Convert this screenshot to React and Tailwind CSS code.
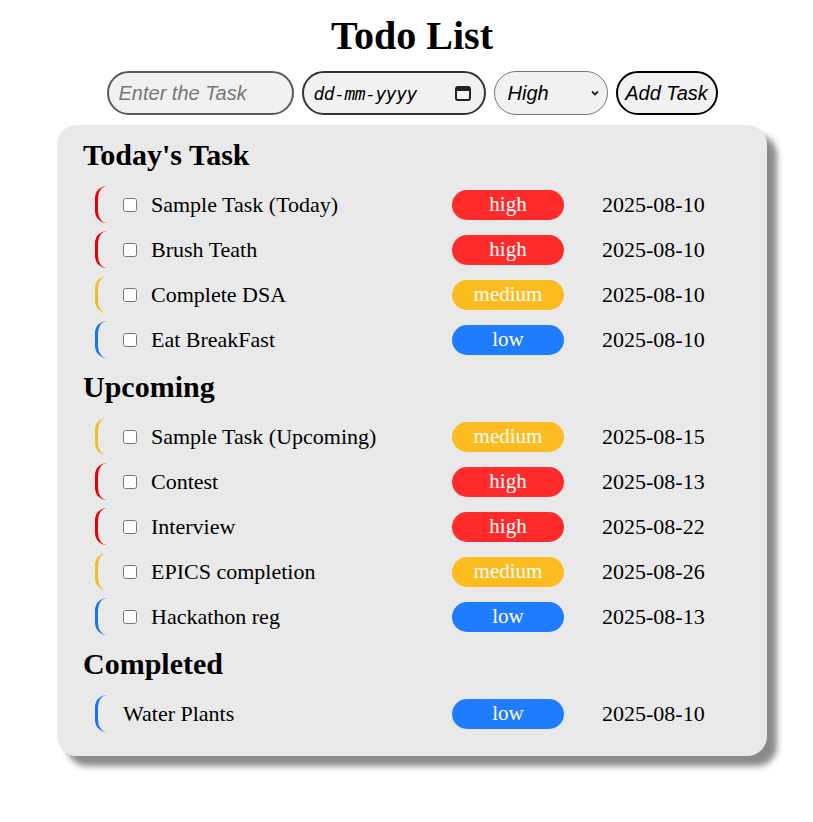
import React from "react";

const colors = {
  high: { badge: "bg-[#ff2a2a]", line: "border-l-[#e60000]" },
  medium: { badge: "bg-[#fcbc1f]", line: "border-l-[#f7b92a]" },
  low: { badge: "bg-[#1f7cff]", line: "border-l-[#1a73f0]" },
};

const today = [
  { text: "Sample Task (Today)", priority: "high", date: "2025-08-10" },
  { text: "Brush Teath", priority: "high", date: "2025-08-10" },
  { text: "Complete DSA", priority: "medium", date: "2025-08-10" },
  { text: "Eat BreakFast", priority: "low", date: "2025-08-10" },
];

const upcoming = [
  { text: "Sample Task (Upcoming)", priority: "medium", date: "2025-08-15" },
  { text: "Contest", priority: "high", date: "2025-08-13" },
  { text: "Interview", priority: "high", date: "2025-08-22" },
  { text: "EPICS completion", priority: "medium", date: "2025-08-26" },
  { text: "Hackathon reg", priority: "low", date: "2025-08-13" },
];

const completed = [{ text: "Water Plants", priority: "low", date: "2025-08-10" }];

const TaskRow = ({ task, done }) => (
  <li
    className={`grid grid-cols-[354px_112px_1fr] items-center h-[37px] rounded-[12px] border-l-[3px] ${colors[task.priority].line}`}
  >
    <div className="flex items-center pl-[25px]">
      {!done && (
        <input type="checkbox" className="w-[14px] h-[14px] mr-[14px] accent-gray-500" />
      )}
      <span className="text-[22px] leading-none">{task.text}</span>
    </div>
    <span
      className={`h-[30px] rounded-full text-white text-[21px] leading-[28px] text-center ${colors[task.priority].badge}`}
    >
      {task.priority}
    </span>
    <span className="pl-[38px] text-[22px] leading-none">{task.date}</span>
  </li>
);

const Section = ({ title, tasks, done, first }) => (
  <>
    <h2 className={`text-[30px] font-bold leading-[34px] ${first ? "" : "mt-3"}`}>{title}</h2>
    <ul className="mt-[14px] ml-3 flex flex-col gap-2">
      {tasks.map((t) => (
        <TaskRow key={t.text} task={t} done={done} />
      ))}
    </ul>
  </>
);

const App = () => {
  return (
    <div
      className="min-h-screen bg-white text-black pt-[14px] pl-[11px] flex flex-col items-center"
      style={{ fontFamily: '"Liberation Serif", serif' }}
    >
      <h1 className="text-[40px] font-bold leading-[44px]">Todo List</h1>
      <div className="mt-[13px] flex items-center gap-2 italic text-[20px] font-['Liberation_Sans',sans-serif]">
        <input
          type="text"
          placeholder="Enter the Task"
          className="w-[187px] h-[44px] rounded-full border-2 border-[#5a5a5a] bg-[#f1f1f1] pl-[10px] outline-none placeholder:text-[#777]"
        />
        <div className="w-[184px] h-[44px] rounded-full border-2 border-[#333] bg-[#f1f1f1] flex items-center pl-[10px] pr-[12px]">
          <span className="font-['DejaVu_Sans_Mono',monospace] text-[18px] tracking-[-0.5px] flex-1">
            dd-mm-yyyy
          </span>
          <svg width="18" height="18" viewBox="0 0 18 18">
            <rect x="2" y="3" width="14" height="13" rx="2" fill="none" stroke="#222" strokeWidth="2" />
            <rect x="2" y="3" width="14" height="4" fill="#222" />
          </svg>
        </div>
        <div className="w-[114px] h-[44px] rounded-full border border-[#777] bg-[#f1f1f1] flex items-center pl-[13px]">
          <span className="flex-1">High</span>
          <svg width="12" height="12" viewBox="0 0 12 12" className="mr-[6px]">
            <path d="M3 4.5 L6 7.5 L9 4.5" fill="none" stroke="#222" strokeWidth="1.8" />
          </svg>
        </div>
        <button className="w-[102px] h-[44px] rounded-full border-2 border-black bg-[#f1f1f1] italic text-[20px] text-black">
          Add Task
        </button>
      </div>
      <div className="mt-[10px] w-[710px] rounded-[20px] bg-[#e9e9e9] pt-[13px] pb-[24px] px-[26px] shadow-[10px_10px_6px_#8a8a8a]">
        <Section title="Today's Task" tasks={today} first />
        <Section title="Upcoming" tasks={upcoming} />
        <Section title="Completed" tasks={completed} done />
      </div>
    </div>
  );
};

export default App;
